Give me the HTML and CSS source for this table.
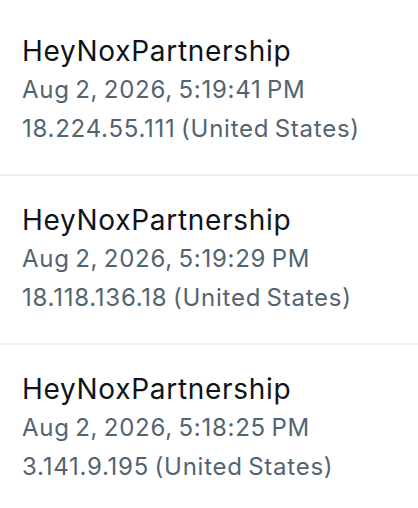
FILE: index.html
```html
<!DOCTYPE html>
<html>
<head>
<meta charset="utf-8">
<link rel="stylesheet" href="styles.css">
</head>
<body>
<ul class="sessions">
  <li class="session">
    <div class="session-name">HeyNoxPartnership</div>
    <div class="session-meta">Aug 2, 2026, 5:19:41 PM</div>
    <div class="session-meta">18.224.55.111 (United States)</div>
  </li>
  <li class="session">
    <div class="session-name">HeyNoxPartnership</div>
    <div class="session-meta">Aug 2, 2026, 5:19:29 PM</div>
    <div class="session-meta">18.118.136.18 (United States)</div>
  </li>
  <li class="session">
    <div class="session-name">HeyNoxPartnership</div>
    <div class="session-meta">Aug 2, 2026, 5:18:25 PM</div>
    <div class="session-meta">3.141.9.195 (United States)</div>
  </li>
</ul>
</body>
</html>
```

FILE: styles.css
```css
html, body {
  margin: 0;
  padding: 0;
  background: #ffffff;
}
body {
  font-family: Inter, "Liberation Sans", sans-serif;
  overflow: hidden;
}
.sessions {
  list-style: none;
  margin: 0;
  padding: 7px 0 0 0;
}
.session {
  padding: 26px 22px 26px 22px;
  border-bottom: 2px solid #eff3f4;
}
.session-name {
  font-size: 28px;
  line-height: 37px;
  letter-spacing: 0.7px;
  color: #0f1419;
}
.session-meta {
  font-size: 24px;
  line-height: 39px;
  letter-spacing: 0.75px;
  word-spacing: -2px;
  color: #536471;
}
```
